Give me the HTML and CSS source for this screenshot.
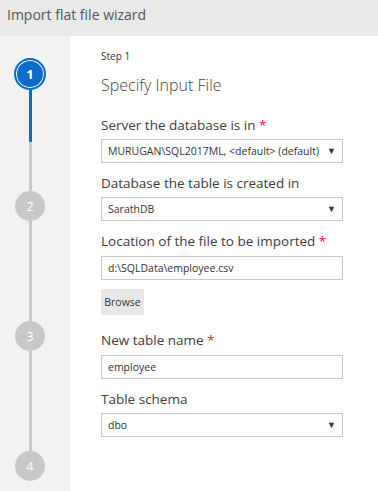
FILE: index.html
```html
<!DOCTYPE html>
<html lang="en">
<head>
    <meta charset="UTF-8">
    <title>Import flat file wizard</title>
    <link rel="stylesheet" href="styles.css">
</head>
<body>
    <div class="header">Import flat file wizard</div>
    <div class="main">
        <div class="steps">
            <div class="circle active">1</div>
            <div class="connector done"></div>
            <div class="circle">2</div>
            <div class="connector"></div>
            <div class="circle">3</div>
            <div class="connector"></div>
            <div class="circle">4</div>
        </div>
        <div class="content">
            <div class="step-no">Step 1</div>
            <h2 class="title">Specify Input File</h2>

            <div class="form-group">
                <label>Server the database is in <span class="req">*</span></label>
                <div class="select">MURUGAN\SQL2017ML, &lt;default&gt; (default)</div>
            </div>
            <div class="form-group">
                <label>Database the table is created in</label>
                <div class="select">SarathDB</div>
            </div>
            <div class="form-group file">
                <label>Location of the file to be imported <span class="req">*</span></label>
                <input type="text" value="d:\SQLData\employee.csv">
            </div>
            <button type="button" class="browse">Browse</button>
            <div class="form-group">
                <label>New table name <span class="req">*</span></label>
                <input type="text" value="employee">
            </div>
            <div class="form-group">
                <label>Table schema</label>
                <div class="select">dbo</div>
            </div>
        </div>
    </div>
</body>
</html>
```

FILE: styles.css
```css
body {
    margin: 0;
    font-family: "Open Sans", sans-serif;
    color: #333333;
    background-color: #ffffff;
}

.header {
    height: 36px;
    line-height: 30px;
    padding-left: 7px;
    background-color: #e9e9e9;
    color: #555555;
    font-size: 14px;
}

.main {
    display: flex;
    height: 455px;
}

.steps {
    width: 70px;
    background-color: #f2f2f2;
    display: flex;
    flex-direction: column;
    align-items: center;
    padding-top: 22px;
    padding-right: 10px;
    box-sizing: border-box;
}

.circle {
    width: 30px;
    height: 30px;
    border-radius: 50%;
    background-color: #c8c8c8;
    color: #ffffff;
    font-size: 13px;
    line-height: 30px;
    text-align: center;
    flex-shrink: 0;
}

.circle.active {
    width: 32px;
    height: 32px;
    line-height: 28px;
    box-sizing: border-box;
    background-color: #0b6cca;
    border: 2px solid #0b6cca;
    box-shadow: inset 0 0 0 1px #ffffff;
    font-weight: bold;
}

.connector {
    width: 3px;
    height: 100px;
    background-color: #c8c8c8;
    flex-shrink: 0;
}

.connector.done {
    height: 101px;
    background: linear-gradient(#0b6cca 52px, #c8c8c8 52px);
}

.content {
    flex: 1;
    padding-left: 31px;
}

.step-no {
    font-size: 10px;
    margin-top: 13px;
    line-height: 14px;
}

.title {
    font-size: 16px;
    font-weight: 300;
    color: #444444;
    margin: 12px 0 20px 0;
    line-height: 20px;
}

.form-group {
    margin-bottom: 10px;
}

.form-group.file {
    margin-bottom: 9px;
}

.form-group label {
    display: block;
    font-size: 13.5px;
    line-height: 20px;
    margin-bottom: 4px;
    color: #3c3c3c;
}

.req {
    color: #e81123;
}

.select, .form-group input {
    width: 242px;
    height: 24px;
    box-sizing: border-box;
    border: 1px solid #c8c8c8;
    font-family: inherit;
    font-size: 10.5px;
    color: #333333;
    padding: 0 6px;
    line-height: 22px;
    position: relative;
    margin: 0;
}

.select::after {
    content: "\25BC";
    position: absolute;
    right: 6px;
    top: 0;
    font-size: 9px;
    color: #333333;
}

.browse {
    display: block;
    border: none;
    background-color: #e8e8e8;
    color: #333333;
    font-family: inherit;
    font-size: 10.5px;
    width: 43px;
    height: 26px;
    padding: 0;
    margin: 1px 0 15px 0;
}
```
